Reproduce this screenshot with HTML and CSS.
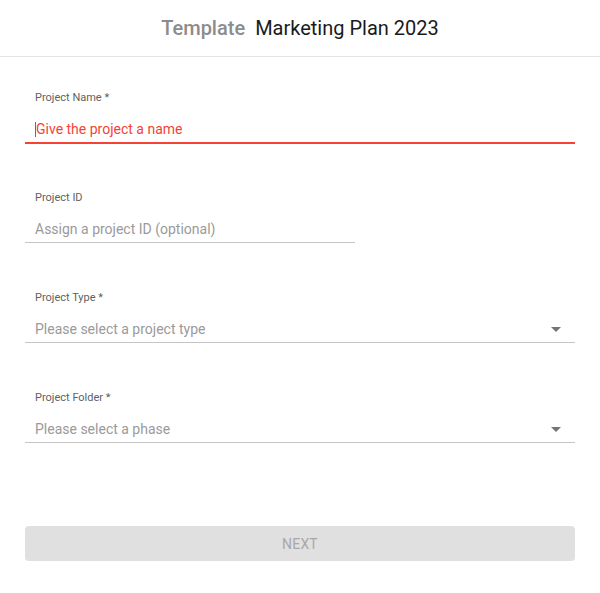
FILE: index.html
```html
<!DOCTYPE html>
<html lang="en">
<head>
<meta charset="utf-8">
<title>Marketing Plan 2023</title>
<link rel="stylesheet" href="styles.css">
</head>
<body>
<header class="header">
  <span class="header-kind">Template</span>
  <span class="header-title">Marketing Plan 2023</span>
</header>
<main class="form">
  <div class="field">
    <div class="label">Project Name *</div>
    <div class="control control-focus"><span class="caret"></span><span class="value-error">Give the project a name</span></div>
  </div>
  <div class="field field-short">
    <div class="label">Project ID</div>
    <div class="control"><span class="placeholder">Assign a project ID (optional)</span></div>
  </div>
  <div class="field">
    <div class="label">Project Type *</div>
    <div class="control control-select"><span class="placeholder">Please select a project type</span><span class="arrow"></span></div>
  </div>
  <div class="field">
    <div class="label">Project Folder *</div>
    <div class="control control-select"><span class="placeholder">Please select a phase</span><span class="arrow"></span></div>
  </div>
  <button class="btn-next" type="button">NEXT</button>
</main>
</body>
</html>
```

FILE: styles.css
```css
* { box-sizing: border-box; }
html, body { margin: 0; padding: 0; background: #ffffff; }
body { font-family: Roboto, "Noto Sans", Arial, sans-serif; color: #212121; }

.header {
  height: 57px;
  border-bottom: 1px solid #e4e4e4;
  display: flex;
  align-items: center;
  justify-content: center;
  gap: 10px;
  padding-bottom: 1px;
  font-size: 20px;
}
.header-kind { color: #8c8c8c; font-weight: 500; }
.header-title { color: #1a1a1a; font-weight: 400; }

.form {
  padding: 34px 25px 0 25px;
  display: flex;
  flex-direction: column;
}
.field { display: flex; flex-direction: column; margin-bottom: 48px; }
.field-short { width: 330px; }
.label {
  font-size: 11px;
  line-height: 13px;
  color: #5f5f5f;
  padding-left: 10px;
}
.control {
  margin-top: 11px;
  height: 28px;
  border-bottom: 1px solid #c4c4c4;
  padding: 1px 14px 0 10px;
  display: flex;
  align-items: center;
  font-size: 14px;
  line-height: 16px;
}
.control-focus {
  border-bottom: 1px solid #f44336;
  box-shadow: 0 1px 0 #f44336;
}
.caret {
  display: inline-block;
  width: 1px;
  height: 15px;
  background: #e53935;
}
.value-error { color: #f44336; }
.placeholder { color: #9a9a9a; flex: 1; }
.control-select { justify-content: space-between; }
.arrow {
  width: 0; height: 0;
  border-left: 5px solid transparent;
  border-right: 5px solid transparent;
  border-top: 5px solid #757575;
  margin-top: 1px;
}
.btn-next {
  margin-top: 35px;
  height: 35px;
  width: 100%;
  border: none;
  border-radius: 4px;
  background: #e0e0e0;
  color: #a8a8a8;
  font-family: Roboto, "Noto Sans", Arial, sans-serif;
  font-size: 14px;
  letter-spacing: 0.2px;
}
```
